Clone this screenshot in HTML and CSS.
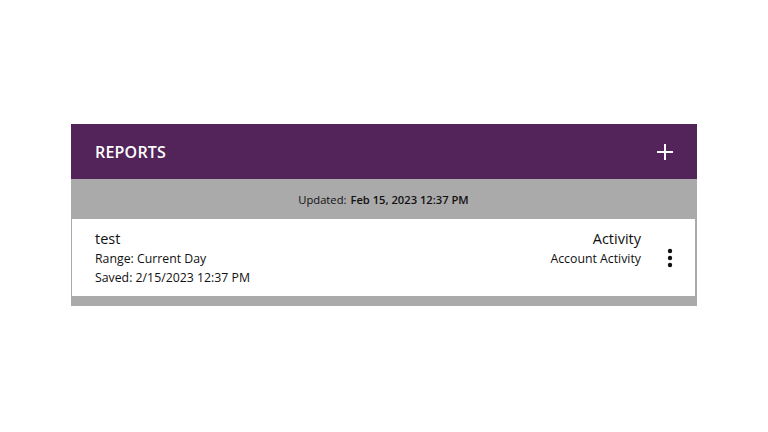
FILE: index.html
```html
<!DOCTYPE html>
<html>
<head>
<meta charset="utf-8">
<link rel="stylesheet" href="styles.css">
</head>
<body>
<div class="page">
  <section class="card">
    <header class="card-head">
      <h1 class="title">REPORTS</h1>
      <button class="add" aria-label="Add report">
        <svg width="18" height="18" viewBox="0 0 18 18"><path d="M9 1v16M1 9h16" stroke="#fff" stroke-width="2" fill="none"/></svg>
      </button>
    </header>
    <div class="updated">Updated: <b>Feb 15, 2023 12:37 PM</b></div>
    <div class="row">
      <div class="info">
        <div class="name">test</div>
        <div class="meta">Range: Current Day</div>
        <div class="meta">Saved: 2/15/2023 12:37 PM</div>
      </div>
      <div class="type">
        <div class="type-main">Activity</div>
        <div class="meta">Account Activity</div>
      </div>
      <div class="more">
        <svg width="6" height="20" viewBox="0 0 6 20"><circle cx="3" cy="3" r="2.2" fill="#111"/><circle cx="3" cy="10" r="2.2" fill="#111"/><circle cx="3" cy="17" r="2.2" fill="#111"/></svg>
      </div>
    </div>
  </section>
</div>
</body>
</html>
```
FILE: styles.css
```css
* { box-sizing: border-box; }
html, body { margin: 0; padding: 0; background: #fff; }
body { font-family: "Open Sans", "Noto Sans", sans-serif; color: #111; }
.page { padding: 124px 71px 0 71px; }
.card { background: #aaaaaa; padding: 0 2px 10px 1px; }
.card-head {
  background: #53245a;
  height: 55px;
  margin: 0 -2px 0 -1px;
  display: flex;
  align-items: center;
  justify-content: space-between;
  padding: 0 23px 0 24px;
}
.title { margin: 0; color: #fff; font-size: 16px; font-weight: 600; letter-spacing: 0.2px; }
.add { background: none; border: 0; padding: 0; display: flex; }
.updated {
  height: 40px;
  display: flex;
  align-items: center;
  justify-content: center;
  font-size: 11.2px;
  color: #111;
}
.updated b { font-weight: 600; margin-left: 4px; }
.row {
  background: #fff;
  height: 77px;
  display: flex;
  align-items: flex-start;
  padding: 10px 0 0 23px;
}
.info { flex: 1; }
.name { font-size: 14.5px; line-height: 20px; }
.meta { font-size: 12.3px; line-height: 19px; }
.type { text-align: right; }
.type-main { font-size: 14.5px; line-height: 20px; }
.more { width: 54px; display: flex; justify-content: center; padding-top: 19px; padding-left: 4px; }
```
